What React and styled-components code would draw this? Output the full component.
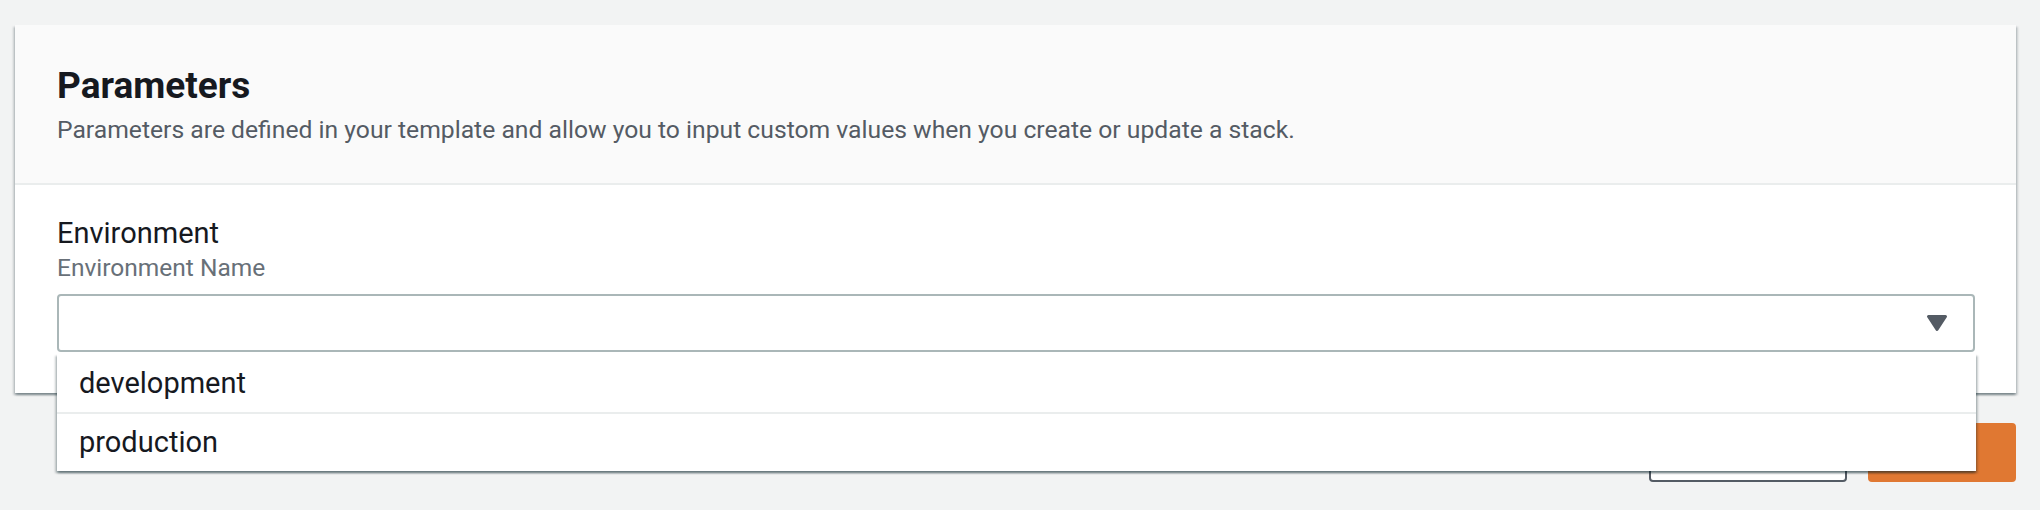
import React from "react";
import styled, { createGlobalStyle } from "styled-components";

const Global = createGlobalStyle`
  html, body { margin: 0; padding: 0; background: #f2f3f3; }
  body { font-family: Roboto, "Liberation Sans", Arial, sans-serif; color: #16191f; }
  * { box-sizing: border-box; }
`;

const Page = styled.div`
  padding: 25px 24px 0 15px;
  min-height: 510px;
`;

const Card = styled.section`
  background: #ffffff;
  box-shadow: 0 2px 2px 0 rgba(0, 28, 36, 0.3), 2px 2px 2px 0 rgba(0, 28, 36, 0.15),
    -2px 2px 2px 0 rgba(0, 28, 36, 0.15);
`;

const Header = styled.header`
  background: #fafafa;
  border-bottom: 2px solid #eaeded;
  padding: 39px 41px 36px 42px;
`;

const Title = styled.h2`
  margin: 0;
  font-size: 37px;
  line-height: 44px;
  font-weight: 700;
  color: #16191f;
`;

const Description = styled.p`
  margin: 5px 0 0;
  font-size: 24.7px;
  line-height: 34px;
  color: #545b64;
`;

const Body = styled.div`
  padding: 30px 41px 41px 42px;
`;

const Label = styled.div`
  font-size: 29px;
  line-height: 36px;
  color: #16191f;
`;

const Hint = styled.div`
  margin-top: 1px;
  font-size: 24.5px;
  line-height: 32px;
  color: #687078;
`;

const SelectWrap = styled.div`
  position: relative;
  margin-top: 10px;
`;

const SelectBox = styled.div`
  height: 58px;
  border: 2px solid #aab7b8;
  border-radius: 4px;
  background: #fff;
  display: flex;
  align-items: center;
  justify-content: flex-end;
  padding-right: 25px;
`;

const Menu = styled.ul`
  position: absolute;
  top: calc(100% + 2px);
  left: 0;
  right: -1px;
  margin: 0;
  padding: 0;
  list-style: none;
  background: #fff;
  z-index: 10;
  box-shadow: 0 2px 2px 0 rgba(0, 28, 36, 0.35), 2px 2px 2px 0 rgba(0, 28, 36, 0.2),
    -2px 2px 2px 0 rgba(0, 28, 36, 0.2);
`;

const Option = styled.li`
  height: ${(p) => (p.$last ? "57px" : "58px")};
  line-height: ${(p) => (p.$last ? "57px" : "58px")};
  padding: 0 22px;
  font-size: 29px;
  color: #16191f;
  border-bottom: ${(p) => (p.$last ? "none" : "2px solid #eaeded")};
  box-sizing: content-box;
`;

const Footer = styled.div`
  display: flex;
  justify-content: flex-end;
  gap: 21px;
  margin-top: 30px;
`;

const Button = styled.button`
  height: 59px;
  width: ${(p) => p.$w}px;
  border-radius: 4px;
  font-family: inherit;
  font-size: 28px;
  font-weight: 700;
  border: 2px solid ${(p) => (p.$primary ? "#e07832" : "#545b64")};
  background: ${(p) => (p.$primary ? "#e07832" : "#ffffff")};
  color: ${(p) => (p.$primary ? "#ffffff" : "#545b64")};
`;

const Caret = () => (
  <svg width="22" height="18" viewBox="0 0 22 18">
    <path d="M2.5 2.5 L19.5 2.5 L11 15.5 Z" fill="#545b64" stroke="#545b64" strokeWidth="3" strokeLinejoin="round" />
  </svg>
);

export default function App() {
  return (
    <>
      <Global />
      <Page>
        <Card>
          <Header>
            <Title>Parameters</Title>
            <Description>
              Parameters are defined in your template and allow you to input custom values when you create or update a stack.
            </Description>
          </Header>
          <Body>
            <Label>Environment</Label>
            <Hint>Environment Name</Hint>
            <SelectWrap>
              <SelectBox>
                <Caret />
              </SelectBox>
              <Menu>
                <Option>development</Option>
                <Option $last>production</Option>
              </Menu>
            </SelectWrap>
          </Body>
        </Card>
        <Footer>
          <Button $w={198}>Cancel</Button>
          <Button $w={148} $primary>Next</Button>
        </Footer>
      </Page>
    </>
  );
}
